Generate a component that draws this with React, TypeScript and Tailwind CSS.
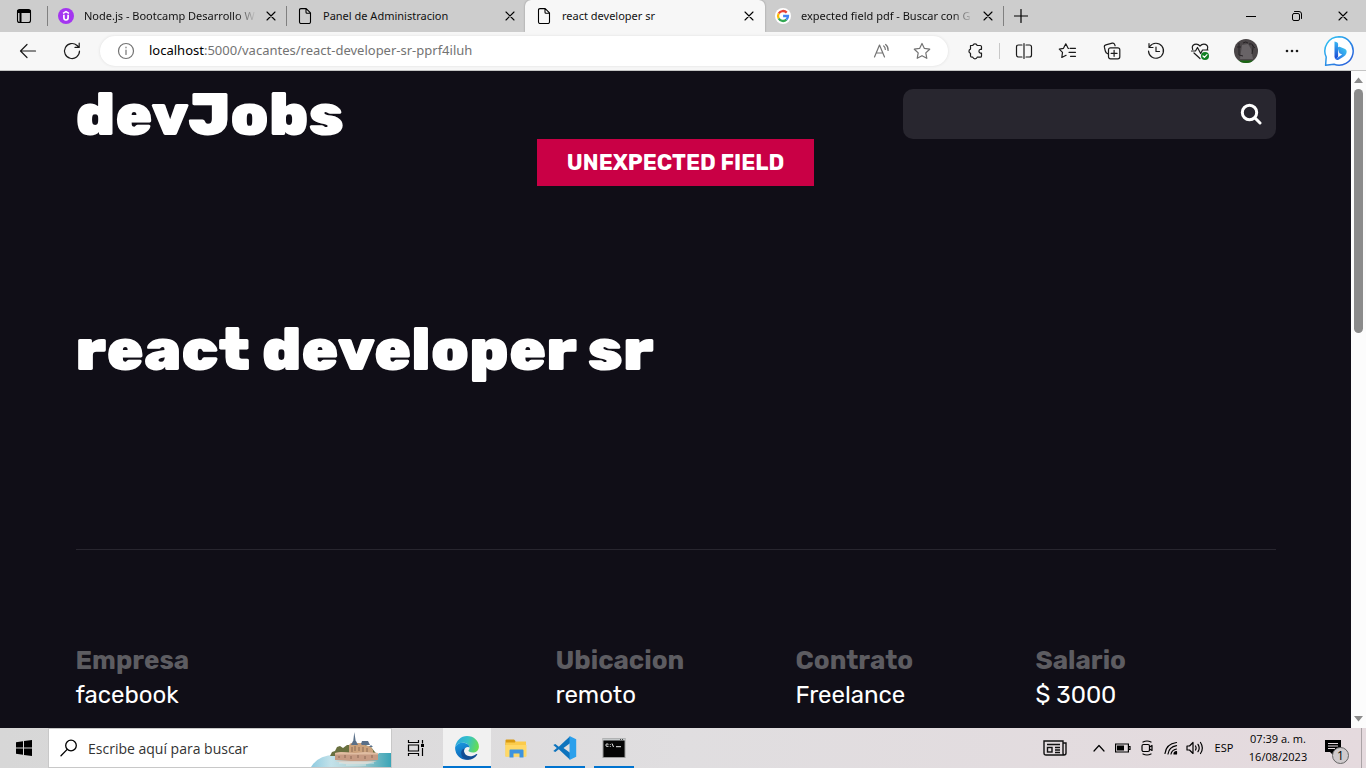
import type { ReactNode, SVGProps } from "react";

type IconProps = SVGProps<SVGSVGElement>;

function Line({ children, viewBox = "0 0 20 20", className = "size-5", ...rest }: IconProps) {
  return (
    <svg
      viewBox={viewBox}
      className={`shrink-0 ${className}`}
      fill="none"
      stroke="currentColor"
      strokeWidth={1.2}
      strokeLinecap="round"
      strokeLinejoin="round"
      aria-hidden="true"
      {...rest}
    >
      {children}
    </svg>
  );
}

const CloseIcon = () => (
  <Line viewBox="0 0 10 10" className="size-[10px]" strokeWidth={1.1}>
    <path d="M1 1l8 8M9 1l-8 8" />
  </Line>
);

const PageIcon = () => (
  <Line viewBox="0 0 16 16" className="size-4" strokeWidth={1.1}>
    <path d="M2.500 2Q2.500.600 4 .600h5.200l4.300 4.300V14q0 1.500-1.500 1.500H4q-1.500 0-1.500-1.500zM9 .900v3.300q0 1 1 1h3.300" />
  </Line>
);

const UdemyIcon = () => (
  <svg viewBox="0 0 16 16" className="size-4 shrink-0" aria-hidden="true">
    <circle cx="8" cy="8" r="8" fill="#a435f0" />
    <path d="M5 5.400L8 3.600l3 1.800" fill="none" stroke="#fff" strokeWidth="1.400" />
    <path d="M5.900 6.800v3q0 2.200 2.100 2.200t2.100-2.200v-3" fill="none" stroke="#fff" strokeWidth="1.700" />
  </svg>
);

const GoogleIcon = () => (
  <svg viewBox="0 0 16 16" className="size-4 shrink-0" aria-hidden="true">
    <circle cx="8" cy="8" r="8" fill="#fff" />
    <g fill="none" strokeWidth="2.3">
      <path d="M11.7 4.6A5 5 0 0 0 3.7 5.5" stroke="#ea4335" />
      <path d="M3.7 5.5a5 5 0 0 0 0 5" stroke="#fbbc05" />
      <path d="M3.7 10.5a5 5 0 0 0 7.7 1.2" stroke="#34a853" />
      <path d="M11.4 11.7A5 5 0 0 0 13 8H8.1" stroke="#4285f4" />
    </g>
  </svg>
);

const BingIcon = () => (
  <svg viewBox="0 0 32 32" className="size-8" aria-hidden="true">
    <defs>
      <linearGradient id="bing-ring" x1="0" y1="0" x2="1" y2="1">
        <stop offset="0" stopColor="#2cc8f5" />
        <stop offset="1" stopColor="#2a55d8" />
      </linearGradient>
      <linearGradient id="bing-stem" x1="0" y1="0" x2="0" y2="1">
        <stop offset="0" stopColor="#38b8f4" />
        <stop offset="1" stopColor="#1b48d4" />
      </linearGradient>
      <linearGradient id="bing-bowl" x1="1" y1="0" x2="0" y2="1">
        <stop offset="0" stopColor="#3fd0f0" />
        <stop offset="1" stopColor="#2660e6" />
      </linearGradient>
    </defs>
    <path d="M16 1.800a14.200 14.200 0 1 1-5 27.500l-8.400 1 .600-8.300A14.200 14.200 0 0 1 16 1.800z" fill="#fff" stroke="url(#bing-ring)" strokeWidth="1.500" strokeLinejoin="round" />
    <path d="M11.500 6.400l2.400.900q1.200.500 1.200 1.800v12.600l-1.700 2q-1.900.200-1.900-2.200z" fill="url(#bing-stem)" />
    <path d="M16.600 11.700l5 2q2.800 1.400 1.800 4.600-.700 2.100-3 3.500l-4.800 2.900q-2.800.900-3.800-1.800 1.500.600 3-.400l4.300-2.900-2.100-1.100q-.700-.400-1-1.200l-1.200-4q-.400-1.800 1.800-1.600z" fill="url(#bing-bowl)" />
  </svg>
);

const EdgeIcon = () => (
  <svg viewBox="0 0 24 24" className="size-6" aria-hidden="true">
    <defs>
      <linearGradient id="edge-top" x1="0" y1="0.3" x2="1" y2="0.5">
        <stop offset="0" stopColor="#2aa6dd" />
        <stop offset="0.5" stopColor="#35c1c8" />
        <stop offset="1" stopColor="#67de50" />
      </linearGradient>
      <linearGradient id="edge-body" x1="0" y1="0" x2="0.4" y2="1">
        <stop offset="0" stopColor="#1b9de2" />
        <stop offset="1" stopColor="#0b61b4" />
      </linearGradient>
    </defs>
    <path d="M.2 11.2C1 4.8 6 .1 12 .1c7 0 11.9 4.9 11.9 10.3 0 3.9-2.8 6.1-6.1 6.1-3 0-4.5-1.2-4.3-2 .3-.7 1.1-1 1.1-2.7 0-2.7-3-5-6.6-5C4 6.800 1.200 8.700.2 11.200z" fill="url(#edge-top)" />
    <path d="M.1 11.5C1 8.700 4.300 6.600 8 6.700c3.800.1 6.500 2.200 6.600 4.900-1.100-1.500-5.500-.7-5.600 3.400-.1 4 4.100 6.700 8.200 6.300C13.500 25 7.500 24.500 3.900 20.800A12 12 0 0 1 .1 11.500z" fill="url(#edge-body)" />
    <path d="M9.500 12.600c-2 4.400 2.200 8.600 7 7.600 2.200-.5 4-1.500 5-2.200.6-.3 1 .2.700.7-4 6.100-12 6.400-14.900 2-2.300-3.500-.9-7.700 2.200-8.100z" fill="#124d94" />
  </svg>
);

const ExplorerIcon = () => (
  <svg viewBox="0 0 22 20" className="h-5 w-[22px]" aria-hidden="true">
    <path d="M.5 2.500q0-1 1-1h7.500l1.500 1.500v4h-10z" fill="#d99a13" />
    <path d="M.5 4.500h9.500l1-1h10v15H.5z" fill="#fbcb4b" />
    <path d="M.5 7h21v11.500H.5z" fill="#ffd866" />
    <path d="M4.500 19.500v-7q0-1 1-1h12q1 0 1 1v7h-4v-4h-6v4z" fill="#3c93df" />
  </svg>
);

const CodeIcon = () => (
  <svg viewBox="0 0 24 24" className="size-6" aria-hidden="true">
    <path d="M17 .3L5.800 10.800 2.300 8 .3 9l3.500 3-3.500 3 2 1 3.500-2.800L17 23.700l1-6.200-7.500-5.500L18 6.500z" fill="#0d73bd" />
    <path d="M17 .2l6.200 3v17.600l-6.200 3q-.5-.2-.5-.9V1.100q0-.6.5-.9z" fill="#2ba0ec" />
  </svg>
);

const TerminalIcon = () => (
  <svg viewBox="0 0 24 20" className="h-5 w-6" aria-hidden="true">
    <rect x="1" y=".5" width="22" height="19" fill="#050505" stroke="#9b9b9b" />
    <path d="M1 1.500h22" stroke="#c4c8ca" strokeWidth="2" />
    <path d="M18 1.500h1M20 1.500h1" stroke="#444" />
    <path d="M6.500 6.300Q4 5 3.800 7t2.700 1.300M8.300 6v.8M8.300 8v.8M10 5.500l1.500 3.500M14 8.700h5" stroke="#eee" fill="none" />
  </svg>
);

const CastleArt = () => (
  <svg viewBox="0 0 80 38" className="h-[38px] w-20 shrink-0" aria-hidden="true">
    <defs>
      <linearGradient id="sea" x1="0" y1="0" x2="1" y2="0">
        <stop offset="0" stopColor="#8fcbe0" />
        <stop offset="0.25" stopColor="#c3e2ea" />
        <stop offset="0.6" stopColor="#a9cdd0" />
        <stop offset="1" stopColor="#3ba5b7" />
      </linearGradient>
    </defs>
    <path d="M0 38q7-12 24-12h42l2-2h12v14z" fill="url(#sea)" />
    <path d="M19 27l2-4 3-1 2-4 3-1 3 2 4-3 18 0 6 2 4 5 3 4z" fill="#69703f" />
    <path d="M38 24v-8l2-2h13l2 3h4l3 4v3z" fill="#cba27c" />
    <path d="M42 14l1.300-11L45 14zM40 16l2-4h3l2 4zM50 15l1-3h6l2 4h-8zM58 18l2-2 2 2z" fill="#5a7089" />
    <path d="M24 24l6-1 14 1 10-1 13 1v7l-12 1-15 0-16-1z" fill="#c69a82" />
    <path d="M24 24l6-1 14 1 10-1 13 1v1.500H24z" fill="#e0bda2" />
    <path d="M41 18v5M44 17v5M48 18v4M52 18v5M56 19v4M28 27v2M34 26v3M40 27v3M47 26v3M54 27v3M61 26v3" stroke="#876450" strokeWidth=".9" fill="none" />
    <path d="M24 32h42l-10 3-22 0z" fill="#ddd0c5" opacity=".8" />
    <path d="M28 34h35M35 36h20" stroke="#e2efee" strokeWidth=".8" />
  </svg>
);

function Tab({ title, icon, active = false, faded = false }: { title: string; icon: ReactNode; active?: boolean; faded?: boolean }) {
  return (
    <div
      className={`flex min-w-0 items-center gap-[10px] ${
        active ? "w-60 rounded-t-md bg-[#f7f7f7] px-[11px] shadow-[0_0_2px_#888]" : "w-[238px] px-[10px]"
      }`}
    >
      {icon}
      <button
        className={`min-w-0 flex-1 text-left text-[11px] whitespace-nowrap ${
          faded ? "bg-linear-to-r from-[#111] from-88% to-transparent bg-clip-text text-transparent" : "text-[#111]"
        }`}
      >
        {title}
      </button>
      <button aria-label={`Cerrar ${title}`}>
        <CloseIcon />
      </button>
    </div>
  );
}

const Separator = () => <div className="my-[6px] w-px shrink-0 bg-[#808080]" />;

function TabBar() {
  return (
    <div className="flex h-8 shrink-0 bg-[#cdcdcd] font-['Segoe_UI','Noto_Sans','Open_Sans',sans-serif]">
      <button aria-label="Menú de pestañas" className="flex w-[47px] shrink-0 items-center justify-center">
        <Line viewBox="0 0 16 16" className="size-4" strokeWidth={1.1}>
          <rect x="1.500" y="1.500" width="13" height="13" rx="2" />
          <path d="M2 3h12M4.500 5v9" strokeWidth={2} />
          <path d="M2 4.500h12" />
        </Line>
      </button>
      <Separator />
      <Tab title="Node.js - Bootcamp Desarrollo W" icon={<UdemyIcon />} faded />
      <Separator />
      <Tab title="Panel de Administracion" icon={<PageIcon />} />
      <Tab title="react developer sr" icon={<PageIcon />} active />
      <Tab title="expected field pdf - Buscar con G" icon={<GoogleIcon />} faded />
      <Separator />
      <button aria-label="Nueva pestaña" className="flex w-[34px] items-center justify-center">
        <Line viewBox="0 0 14 14" className="size-[14px]">
          <path d="M7 .5v13M.5 7h13" />
        </Line>
      </button>
      <div className="ml-auto flex shrink-0">
        <button aria-label="Minimizar" className="flex w-[46px] items-center justify-center">
          <Line viewBox="0 0 10 10" className="size-[10px]">
            <path d="M0 5.500h10" />
          </Line>
        </button>
        <button aria-label="Restaurar" className="flex w-[46px] items-center justify-center">
          <Line viewBox="0 0 10 10" className="size-[10px]" strokeWidth={1}>
            <rect x=".5" y="2.500" width="7" height="7" rx="1.500" />
            <path d="M2.500.5h4.500q2.500 0 2.500 2.500v4.500" />
          </Line>
        </button>
        <button aria-label="Cerrar" className="flex w-[46px] items-center justify-center">
          <CloseIcon />
        </button>
      </div>
    </div>
  );
}

function ToolButton({ label, children }: { label: string; children: ReactNode }) {
  return (
    <button aria-label={label} className="flex w-11 shrink-0 items-center justify-center">
      {children}
    </button>
  );
}

function Toolbar() {
  return (
    <div className="flex h-[39px] shrink-0 border-b border-[#c4c4c4] bg-[#f7f7f7] pl-[6px] text-[#1b1b1b]">
      <ToolButton label="Atrás">
        <Line>
          <path d="M17.500 10h-15M9 3.500L2.500 10 9 16.500" />
        </Line>
      </ToolButton>
      <ToolButton label="Actualizar">
        <Line>
          <path d="M17.500 10a7.500 7.500 0 1 1-2.400-5.500l1.900 1.700M17.200 2.200v4.200H13" />
        </Line>
      </ToolButton>
      <div className="my-1 ml-[6px] flex min-w-0 flex-1 items-center rounded-full bg-white px-[17px] text-[#737373] shadow-[0_0_3px_#ddd]">
        <Line viewBox="0 0 18 18" className="size-[18px]">
          <circle cx="9" cy="9" r="7.500" />
          <path d="M9 8v4.500M9 5.200v.6" />
        </Line>
        <a href="#vacante" className="ml-[14px] min-w-0 flex-1 truncate font-['Segoe_UI','Noto_Sans','Open_Sans',sans-serif] text-[13px]">
          <span className="text-black">localhost</span>:5000/vacantes/react-developer-sr-pprf4iluh
        </a>
        <button aria-label="Leer en voz alta" className="flex w-10 items-center justify-center">
          <Line viewBox="0 0 18 18" className="size-[18px]">
            <path d="M1.500 15L6.500 3l5 12M3.200 11h6.600M10.700 4q1.600 1.300 1.600 3.500M12.600 2.500q2.800 2.200 2.500 6" />
          </Line>
        </button>
        <button aria-label="Agregar a favoritos" className="-mr-[11px] flex w-10 items-center justify-center">
          <Line viewBox="0 0 18 18" className="size-[18px]">
            <path d="M9 1.500l2.400 4.900 5.300.8-3.900 3.700 1 5.400L9 13.700l-4.800 2.600 1-5.400-3.900-3.700 5.300-.8z" />
          </Line>
        </button>
      </div>
      <div className="ml-[6px] flex shrink-0">
        <ToolButton label="Extensiones">
          <Line viewBox="0 0 18 18" className="size-[18px]">
            <path d="M3.500 3.500h2.300a2.300 2.300 0 0 1 4.400 0h3q1.300 0 1.300 1.300v2.500h-1.200a2 2 0 0 0 0 3.800h1.200v2.800q0 1.300-1.300 1.300h-3a2.300 2.300 0 0 1-4.400 0H5q-1.500 0-1.500-1.500v-2.400a2.200 2.200 0 0 1 0-4.200z" />
          </Line>
        </ToolButton>
        <div className="my-[11px] ml-px w-px bg-[#c8c8c8]" />
        <div className="w-[2px]" />
        <ToolButton label="Pantalla dividida">
          <Line>
            <path d="M8 4H4.500Q2.500 4 2.500 6v8q0 2 2 2H8M12 4h3.500q2 0 2 2v8q0 2-2 2H12M10 2.500v15" />
          </Line>
        </ToolButton>
        <ToolButton label="Favoritos">
          <Line>
            <path d="M10.500 7.300h-.4L7.800 2.800 5.500 7.300l-4.200.8 3.200 3.300-.7 5.100 4.300-2.200M12 7.300h5.500M11 11.300h6.500M12.500 15.300h5" />
          </Line>
        </ToolButton>
        <ToolButton label="Colecciones">
          <Line>
            <path d="M5.800 12.800Q3.800 12 3.300 10L2.400 6.200q-.4-1.900 1.500-2.400l6.300-1.600q1.900-.4 2.500 1.400l.4 1.200" />
            <rect x="6.500" y="6.800" width="11.300" height="11" rx="2" />
            <path d="M12.100 9.300v6M9.100 12.300h6" />
          </Line>
        </ToolButton>
        <ToolButton label="Historial">
          <Line>
            <path d="M3.800 5.500A7.500 7.500 0 1 1 2.500 10M3 2.500v4h4M10 6v4.500h3.500" />
          </Line>
        </ToolButton>
        <ToolButton label="Rendimiento">
          <Line>
            <path d="M2.700 8.500C.8 3 7 1.500 10 5c3-3.500 9.200-2 7.300 3.500M1.500 10h4l2-3.500 3.200 6 1.800-3.500h5.500M4 12l6 5.500" />
            <circle cx="15" cy="15" r="4" fill="#128023" stroke="none" />
            <path d="M13 15l1.400 1.400 2.600-2.800" stroke="#fff" />
          </Line>
        </ToolButton>
        <ToolButton label="Perfil">
          <svg viewBox="0 0 24 24" className="ml-1 size-6" aria-hidden="true">
            <defs>
              <clipPath id="avatar-clip">
                <circle cx="12" cy="12" r="12" />
              </clipPath>
            </defs>
            <g clipPath="url(#avatar-clip)">
              <path d="M0 0h24v24H0z" fill="#4b4648" />
              <path d="M8 6l6-1 3 5 2 10H6z" fill="#686366" />
              <path d="M5 4v12l4 1M3 8h4M15 5q5-1 4 4l-1 6M18 6l3 3M9 4q3-2 5 0" stroke="#272326" fill="none" />
              <path d="M0 21.500h24V24H0z" fill="#196812" />
            </g>
          </svg>
        </ToolButton>
        <ToolButton label="Configuración y más">
          <svg viewBox="0 0 14 4" className="ml-2 h-1 w-[14px]" fill="#1b1b1b" aria-hidden="true">
            <circle cx="2" cy="2" r="1.300" />
            <circle cx="7" cy="2" r="1.300" />
            <circle cx="12" cy="2" r="1.300" />
          </svg>
        </ToolButton>
        <button aria-label="Bing" className="ml-[2px] flex w-[54px] items-center justify-center">
          <BingIcon />
        </button>
      </div>
    </div>
  );
}

const details = [
  { label: "Empresa", value: "facebook", span: "col-span-2" },
  { label: "Ubicacion", value: "remoto", span: "" },
  { label: "Contrato", value: "Freelance", span: "" },
  { label: "Salario", value: "$ 3000", span: "" },
];

function JobPage() {
  return (
    <main className="min-w-0 flex-1 overflow-hidden bg-[#100e17] font-[Rubik,Inter,sans-serif] text-white">
      <div className="mx-auto w-full max-w-[1200px]">
        <header className="flex items-start justify-between pt-[18px]">
          <a href="#inicio" className="text-[60px] leading-[52px] font-black">
            devJobs
          </a>
          <form className="flex h-[50px] w-[373px] items-center rounded-[10px] bg-[#28262f] pr-[14px]" onSubmit={(e) => e.preventDefault()}>
            <input aria-label="Buscar vacantes" className="h-full min-w-0 flex-1 bg-transparent px-4 text-[20px] outline-none" />
            <button aria-label="Buscar">
              <svg viewBox="0 0 22 22" className="size-[22px]" fill="none" stroke="#fff" strokeWidth="3" strokeLinecap="round" aria-hidden="true">
                <circle cx="9.500" cy="9.500" r="7.200" />
                <path d="M15 15l5 5" />
              </svg>
            </button>
          </form>
        </header>
        <p role="alert" className="mx-auto -mt-[2px] flex h-[47px] w-[277px] items-center justify-center bg-[#c90045] text-[22px] font-bold uppercase">
          Unexpected field
        </p>
        <h1 className="mt-[134px] text-[60px] leading-[60px] font-black">react developer sr</h1>
        <hr className="mt-[169px] border-[#28262f]" />
        <dl className="mt-[93px] grid grid-cols-5">
          {details.map((d) => (
            <div key={d.label} className={d.span}>
              <dt className="text-[26px] leading-[36px] font-bold text-[#5d5c61]">{d.label}</dt>
              <dd className="text-[24px] leading-[32px]">{d.value}</dd>
            </div>
          ))}
        </dl>
      </div>
    </main>
  );
}

function Scrollbar() {
  return (
    <div className="flex w-[15px] shrink-0 flex-col items-center bg-[#fcfcfc]" aria-hidden="true">
      <svg viewBox="0 0 15 18" className="h-[18px] w-[15px]">
        <path d="M3 12L7.500 6.500 12 12z" fill="#8b8b8b" />
      </svg>
      <div className="h-[244px] w-[9px] rounded-full bg-[#8b8b8b]" />
      <svg viewBox="0 0 15 18" className="mt-auto h-[18px] w-[15px]">
        <path d="M3 6l4.500 5.500L12 6z" fill="#8b8b8b" />
      </svg>
    </div>
  );
}

function TaskButton({ label, running = false, active = false, children }: { label: string; running?: boolean; active?: boolean; children: ReactNode }) {
  return (
    <button aria-label={label} className={`flex w-12 shrink-0 flex-col items-center ${active ? "bg-[#f1f1f1]" : ""}`}>
      <span className="flex flex-1 items-center pt-[2px]">{children}</span>
      <span className={`h-[2px] ${active ? "w-full" : "w-10"} ${running ? "bg-[#0073cf]" : ""}`} />
    </button>
  );
}

function Taskbar() {
  return (
    <footer className="flex h-10 shrink-0 bg-linear-to-r from-[#d7d7d7] via-[#e0dee0] to-[#e5dade] text-black">
      <button aria-label="Inicio" className="flex w-12 items-center justify-center">
        <svg viewBox="0 0 16 16" className="size-4" fill="#000" aria-hidden="true">
          <path d="M0 2.200l7-1v6.300H0zM8 1l8-1v7.500H8zM0 8.500h7v6.300l-7-1zM8 8.500h8V16l-8-1z" />
        </svg>
      </button>
      <label className="flex w-[344px] items-center overflow-hidden border border-[#c8c8c8] bg-white pl-[11px]">
        <Line viewBox="0 0 18 18" className="size-[18px]" strokeWidth={1.300}>
          <circle cx="11" cy="6.500" r="5.300" />
          <path d="M7.200 10.400L1 16.800" />
        </Line>
        <input
          aria-label="Buscar en Windows"
          placeholder="Escribe aquí para buscar"
          className="ml-[10px] min-w-0 flex-1 text-[14px] outline-none placeholder:text-[#333]"
        />
        <CastleArt />
      </label>
      <button aria-label="Vista de tareas" className="mr-[3px] flex w-12 items-center justify-center">
        <svg viewBox="0 0 18 16" className="h-4 w-[18px]" fill="none" stroke="#000" strokeWidth="1.200" aria-hidden="true">
          <path d="M1.500 0v2.500h10V0M1.500 16v-2.500h10V16M1.500 5h10v6h-10zM15.500 0v3.500M15.500 8v8" />
          <path d="M14 4h3v3h-3z" fill="#000" stroke="none" />
        </svg>
      </button>
      <div className="flex gap-px">
        <TaskButton label="Microsoft Edge" running active>
          <EdgeIcon />
        </TaskButton>
        <TaskButton label="Explorador de archivos">
          <ExplorerIcon />
        </TaskButton>
        <TaskButton label="Visual Studio Code" running>
          <CodeIcon />
        </TaskButton>
        <TaskButton label="Símbolo del sistema" running>
          <TerminalIcon />
        </TaskButton>
      </div>
      <div className="ml-auto flex shrink-0 items-center">
        <button aria-label="Noticias" className="mr-5">
          <svg viewBox="0 0 24 16" className="h-4 w-6" fill="none" stroke="#111" strokeWidth="1.400" aria-hidden="true">
            <path d="M20 3h3v10q0 2-2 2H3q-2 0-2-2V1h19v12q0 2 1.500 2M4 4.500h13M12 7.500h5M12 10h5M12 12.500h5" />
            <rect x="4.500" y="7.500" width="4.500" height="4.500" />
          </svg>
        </button>
        <button aria-label="Mostrar iconos ocultos" className="flex w-6 items-center justify-center">
          <Line viewBox="0 0 12 8" className="h-2 w-3">
            <path d="M1 7l5-5.500L11 7" />
          </Line>
        </button>
        <button aria-label="Batería" className="flex w-6 items-center justify-center">
          <svg viewBox="0 0 16 10" className="h-[10px] w-4" aria-hidden="true">
            <path d="M.6 1h12.800v8H.6zM13.400 3.500h1.600v3h-1.600" fill="none" stroke="#000" strokeWidth="1.200" />
            <path d="M2 2.500h7v5H2z" />
          </svg>
        </button>
        <button aria-label="Reunirse ahora" className="flex w-6 items-center justify-center">
          <Line viewBox="0 0 14 16" className="h-4 w-[14px]">
            <path d="M3 2q4-2 8 0M3 14q4 2 8 0" />
            <rect x="2" y="4.500" width="7.500" height="7" rx="1.500" />
            <path d="M9.500 7l2.500-1.500v5L9.500 9" />
          </Line>
        </button>
        <button aria-label="Red" className="flex w-6 items-center justify-center">
          <Line viewBox="0 0 14 14" className="size-[14px]">
            <path d="M1 12.500Q2 3 12.500 1.500M4 13q1-7 8.500-8.300M7 13q.7-4 5.500-5" />
            <path d="M10 13q0-2 2.500-2.300V13z" fill="#000" />
          </Line>
        </button>
        <button aria-label="Volumen" className="flex w-6 items-center justify-center">
          <Line viewBox="0 0 18 14" className="h-[14px] w-[18px]">
            <path d="M1 5h2.500L7 1.500v11L3.500 9H1zM9.500 5q1.200 2 0 4M12 3.300q2.400 3.700 0 7.400M14.500 1.500q3.700 5.500 0 11" />
          </Line>
        </button>
        <button className="w-[34px] text-[11px]">ESP</button>
        <time className="w-[74px] text-center text-[11px] leading-[18px]">
          07:39 a. m.
          <br />
          16/08/2023
        </time>
        <button aria-label="1 notificación" className="relative mr-5 ml-[10px] h-10 w-4">
          <svg viewBox="0 0 16 16" className="size-4" aria-hidden="true">
            <path d="M0 0h16v12H9v4l-4-4H0z" />
            <path d="M3 3.500h10M3 6h10M3 8.500h7" stroke="#e5dade" />
          </svg>
          <span className="absolute top-[19px] left-[7px] flex size-[17px] items-center justify-center rounded-full border border-[#666] bg-[#cfcacc] text-[12px]">1</span>
        </button>
        <div className="mr-1 w-px self-stretch bg-[#aaa3a6]" />
      </div>
    </footer>
  );
}

export default function App() {
  return (
    <div className="flex h-screen flex-col overflow-hidden bg-[#100e17] font-['Segoe_UI','Open_Sans','Noto_Sans',sans-serif]">
      <TabBar />
      <Toolbar />
      <div className="flex min-h-0 flex-1">
        <JobPage />
        <Scrollbar />
      </div>
      <Taskbar />
    </div>
  );
}
